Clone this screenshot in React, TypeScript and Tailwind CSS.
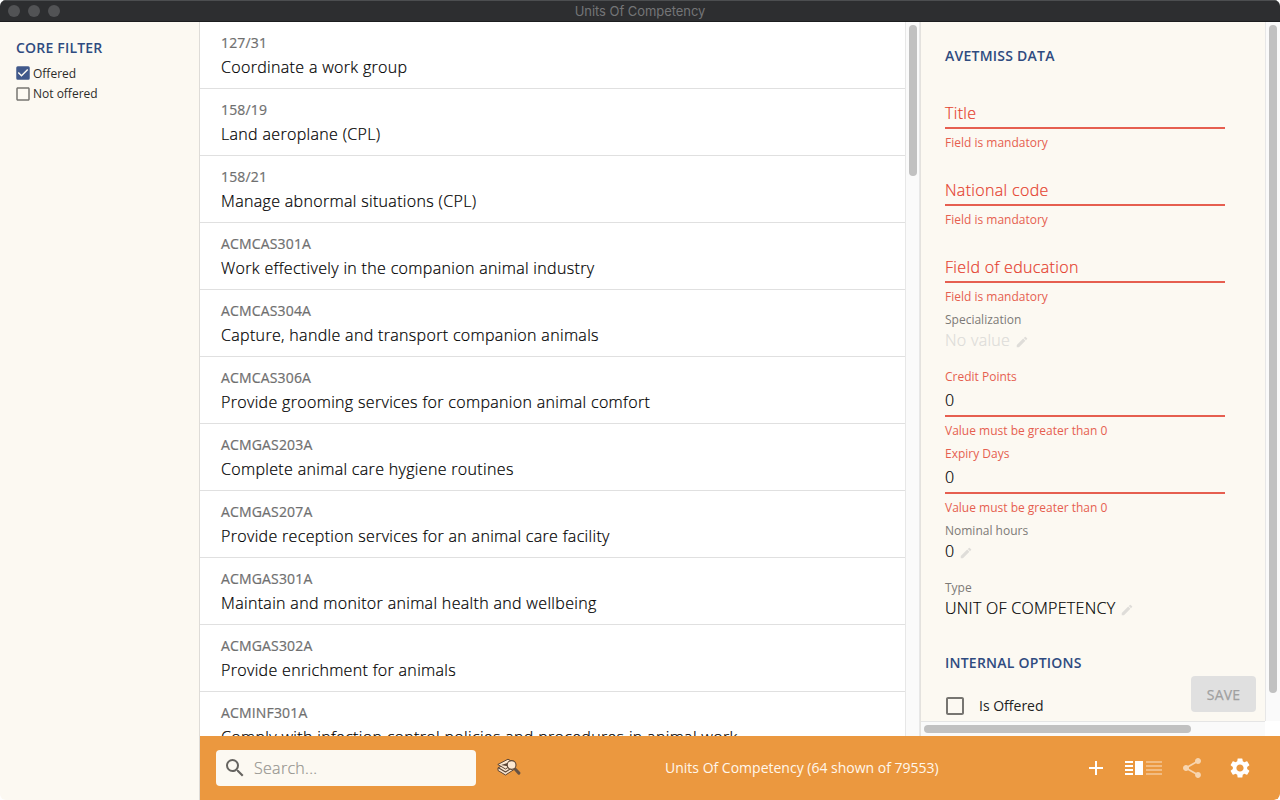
import { MdAdd, MdCheckBox, MdCheckBoxOutlineBlank, MdEdit, MdSearch, MdSettings, MdShare } from "react-icons/md";

const units = [
  ["127/31", "Coordinate a work group"],
  ["158/19", "Land aeroplane (CPL)"],
  ["158/21", "Manage abnormal situations (CPL)"],
  ["ACMCAS301A", "Work effectively in the companion animal industry"],
  ["ACMCAS304A", "Capture, handle and transport companion animals"],
  ["ACMCAS306A", "Provide grooming services for companion animal comfort"],
  ["ACMGAS203A", "Complete animal care hygiene routines"],
  ["ACMGAS207A", "Provide reception services for an animal care facility"],
  ["ACMGAS301A", "Maintain and monitor animal health and wellbeing"],
  ["ACMGAS302A", "Provide enrichment for animals"],
  ["ACMINF301A", "Comply with infection control policies and procedures in animal work"],
];

function TitleBar() {
  return (
    <header className="relative flex h-[22px] shrink-0 items-center justify-center border-t border-b border-t-[#4c4e50] border-b-[#1c1d1f] bg-[#2d2e30]">
      <div className="absolute left-2 flex gap-2">
        <span className="size-3 rounded-full bg-[#525355]" />
        <span className="size-3 rounded-full bg-[#525355]" />
        <span className="size-3 rounded-full bg-[#525355]" />
      </div>
      <h1 className="font-[Inter] text-[13px] leading-5 tracking-[-0.05px] text-[#747577]">Units Of Competency</h1>
    </header>
  );
}

function FilterRow({ label, checked }: { label: string; checked?: boolean }) {
  return (
    <label className="flex h-[20.5px] items-center gap-[1px]">
      {checked ? <MdCheckBox className="size-[18px] text-[#41598b]" /> : <MdCheckBoxOutlineBlank className="size-[18px] text-[#777571]" />}
      <span className="pt-px text-xs leading-4 text-[#2c2c2a]">{label}</span>
    </label>
  );
}

function EmptyField({ label }: { label: string }) {
  return (
    <div className="h-[77px]">
      <div className="flex h-[34px] items-center border-b-2 border-[#e65f50] pt-[3px] text-base font-light tracking-[0.33px] text-[#e5412f] [-webkit-text-stroke:0.2px]">{label}</div>
      <p className="mt-[5px] text-xs leading-[18px] text-[#e65f50]">Field is mandatory</p>
    </div>
  );
}

function NumberField({ label }: { label: string }) {
  return (
    <div className="h-[77px]">
      <p className="text-xs leading-[18px] text-[#e65f50]">{label}</p>
      <div className="flex h-[31px] items-center border-b-2 border-[#e65f50] pb-[2px] text-base font-light text-black [-webkit-text-stroke:0.2px]">0</div>
      <p className="mt-[5px] text-xs leading-[18px] text-[#e65f50]">Value must be greater than 0</p>
    </div>
  );
}

function ReadField({ label, value, muted }: { label: string; value: string; muted?: boolean }) {
  return (
    <div className="h-[57px]">
      <p className="text-xs leading-[18px] text-[#7c7a77]">{label}</p>
      <div className={muted ? "-mt-px flex h-6 items-center gap-[5px] text-base font-light tracking-[0.3px] text-[#dddcd9] [-webkit-text-stroke:0.2px]" : "-mt-px flex h-6 items-center gap-[5px] text-base font-light tracking-[0.28px] text-black [-webkit-text-stroke:0.2px]"}>
        <span>{value}</span>
        <MdEdit className="mt-[3px] size-[14px] text-[#dfddd9]" />
      </div>
    </div>
  );
}

function LayoutIcon() {
  return (
    <svg width="38" height="14" viewBox="0 0 38 14" fill="#fff">
      <path d="M0 0h8v2H0zM0 4h8v2H0zM0 8h8v2H0zM0 12h8v2H0zM10 0h8v14h-8z" />
      <path opacity=".35" d="M21 0h16v2H21zM21 4h16v2H21zM21 8h16v2H21zM21 12h16v2H21z" />
    </svg>
  );
}

function FindRelatedIcon() {
  return (
    <svg width="24" height="20" viewBox="0 0 24 20" fill="none" stroke="#5c4636" strokeLinejoin="round">
      <path d="M1 12.5 8.5 17 17 11.5V9L9 5.5 1 10z" fill="#fae4cd" strokeWidth="1" />
      <path d="M1 9.5 8.5 14 17 8.5" strokeWidth="1.1" />
      <path d="M.8 6.5 11 1.2 18 5 8.5 11z" fill="#fbe6cf" strokeWidth="1" />
      <path d="m4 7 6.5-2v3.2z" fill="#5c4636" stroke="none" />
      <circle cx="14.6" cy="7" r="4.4" fill="#fce8d3" strokeWidth="1.1" />
      <path d="m18.3 11.3 3.6 3.8" strokeWidth="3" strokeLinecap="round" stroke="#665244" />
    </svg>
  );
}

function DetailPanel() {
  return (
    <div className="flex w-[360px] shrink-0 border-l border-[#e4e2de] bg-white">
      <div className="flex w-[344px] flex-col">
        <section className="relative h-[699px] overflow-hidden bg-[#fcf9f2] pl-6">
          <h2 className="pt-6 text-sm leading-5 font-semibold tracking-[0.24px] text-[#2f4b80]">AVETMISS DATA</h2>
          <div className="mt-[29px] w-[280px]">
            <div>
              <EmptyField label="Title" />
              <EmptyField label="National code" />
              <EmptyField label="Field of education" />
            </div>
            <div className="-mt-[15px]">
              <ReadField label="Specialization" value="No value" muted />
              <NumberField label="Credit Points" />
              <NumberField label="Expiry Days" />
              <ReadField label="Nominal hours" value="0" />
              <ReadField label="Type" value="UNIT OF COMPETENCY" />
            </div>
          </div>
          <h2 className="mt-[17px] text-sm leading-5 font-semibold tracking-[0.24px] text-[#2f4b80]">INTERNAL OPTIONS</h2>
          <label className="mt-[21px] -ml-[2px] flex items-center gap-3">
            <MdCheckBoxOutlineBlank className="size-6 text-[#777571]" />
            <span className="text-sm text-[#22221f]">Is Offered</span>
          </label>
          <button className="absolute right-[9px] bottom-[9px] h-9 w-[65px] rounded bg-[#e0e0e0] pt-[2px] text-sm tracking-[0.15px] text-[#a0a0a0] [-webkit-text-stroke:0.25px]">SAVE</button>
        </section>
        <div className="flex h-[15px] items-center border-t border-[#e5e5e5] bg-[#fafafa] pl-[3px]">
          <div className="h-2 w-[267px] rounded-full bg-[#c1c1c1]" />
        </div>
      </div>
      <div className="h-[699px] w-[15px] border-l border-[#e7e7e7] bg-[#fafafa] pt-[3px] pl-[3px]">
        <div className="h-[668px] w-2 rounded-full bg-[#c1c1c1]" />
      </div>
    </div>
  );
}

function BottomBar() {
  return (
    <footer className="flex h-16 shrink-0 items-center rounded-br-md bg-[#eb983f] pl-4">
      <div className="flex h-9 w-[260px] items-center rounded bg-[#fcf9f2] pl-[7px]">
        <MdSearch className="size-6 text-[#666460]" />
        <span className="ml-[7px] text-base font-light tracking-[0.3px] text-[#979590] [-webkit-text-stroke:0.2px]">Search...</span>
      </div>
      <div className="ml-[21px] w-6"><FindRelatedIcon /></div>
      <p className="ml-36 w-[288px] text-sm text-[#fff7ec]">Units Of Competency (64 shown of 79553)</p>
      <div className="ml-auto flex items-center pr-7">
        <MdAdd className="size-6 shrink-0 text-white" />
        <div className="ml-[17px]"><LayoutIcon /></div>
        <MdShare className="ml-[17px] size-6 shrink-0 text-[#f7d5b0]" />
        <MdSettings className="ml-6 size-6 shrink-0 text-white" />
      </div>
    </footer>
  );
}

export default function App() {
  return (
    <div className="h-[800px] w-[1280px] overflow-hidden bg-white font-['Open_Sans',sans-serif]">
      <div className="flex h-full flex-col overflow-hidden rounded-t-md rounded-b-md">
        <TitleBar />
        <div className="flex min-h-0 flex-1">
          <aside className="w-[200px] shrink-0 border-r border-[#dedcd8] bg-[#fcf9f2] pt-4 pl-4">
            <h2 className="text-sm leading-5 font-semibold tracking-[0.2px] text-[#2f4b80]">CORE FILTER</h2>
            <div className="mt-[5px] -ml-[2px]">
              <FilterRow label="Offered" checked />
              <FilterRow label="Not offered" />
            </div>
          </aside>
          <main className="flex min-w-0 flex-1 flex-col">
            <div className="flex h-[714px]">
              <ul className="h-full w-[705px] overflow-hidden bg-white">
                {units.map(([code, name]) => (
                  <li key={code} className="h-[67px] border-b border-[#e0e0e0] pt-[11px] pl-[21px] whitespace-nowrap">
                    <p className="text-sm leading-5 tracking-[0.16px] text-[#6f6f6f] [-webkit-text-stroke:0.2px]">{code}</p>
                    <p className="mt-[2px] text-base leading-6 font-light tracking-[0.33px] text-black [-webkit-text-stroke:0.2px]">{name}</p>
                  </li>
                ))}
              </ul>
              <div className="w-[15px] shrink-0 border-r border-l border-[#e7e7e7] bg-[#fafafa] pt-[3px] pl-[3px]">
                <div className="h-[151px] w-2 rounded-full bg-[#c1c1c1]" />
              </div>
              <DetailPanel />
            </div>
            <BottomBar />
          </main>
        </div>
      </div>
    </div>
  );
}
